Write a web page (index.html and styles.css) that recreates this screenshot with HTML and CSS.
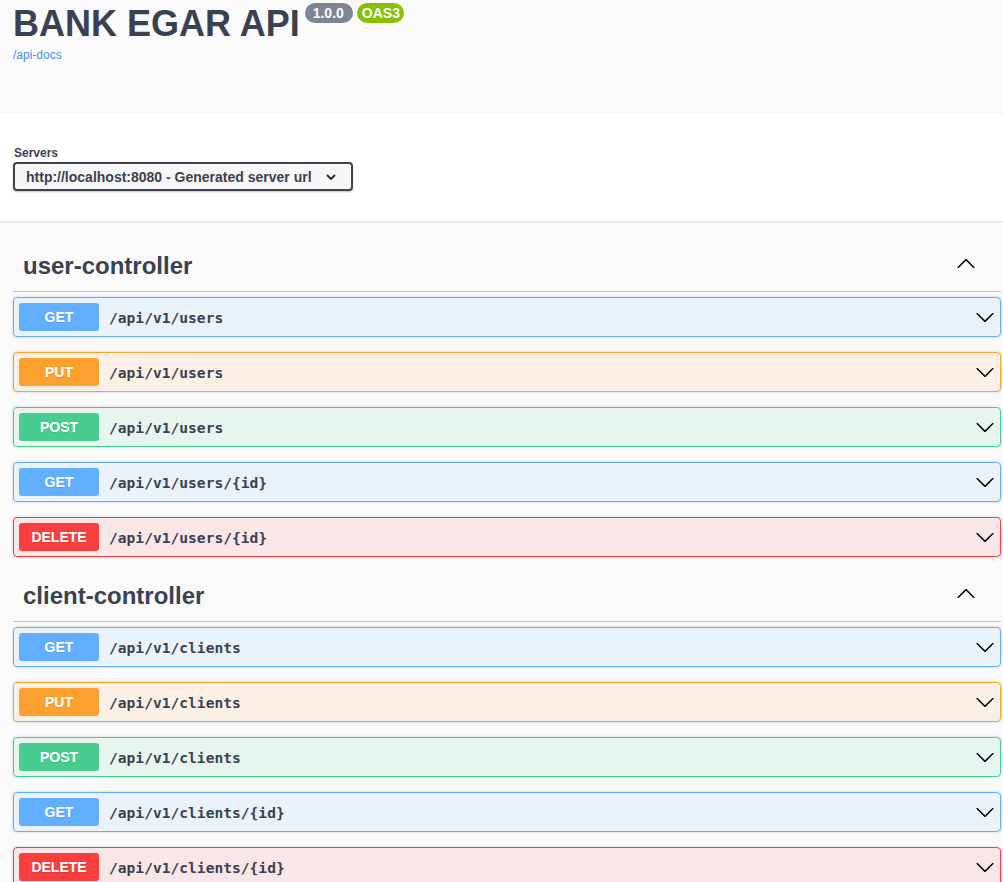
FILE: index.html
```html
<!DOCTYPE html>
<html lang="en">
<head>
<meta charset="utf-8">
<title>BANK EGAR API</title>
<link rel="stylesheet" href="styles.css">
</head>
<body>
<header class="info">
  <div class="wrap">
    <div class="title-row">
      <h2 class="title">BANK EGAR API</h2>
      <span class="badge version">1.0.0</span>
      <span class="badge oas">OAS3</span>
    </div>
    <a class="url" href="#">/api-docs</a>
  </div>
</header>

<section class="scheme">
  <div class="wrap">
    <div class="servers">
      <span class="servers-label">Servers</span>
      <div class="select">
        <span>http://localhost:8080 - Generated server url</span>
        <svg class="select-arrow" width="10" height="6" viewBox="0 0 10 6"><polyline points="1,1 5,5 9,1" fill="none" stroke="#222" stroke-width="1.8"/></svg>
      </div>
    </div>
  </div>
</section>

<main class="wrap">
  <section class="tag-section">
    <h3 class="tag"><span>user-controller</span>
      <svg class="tag-arrow" viewBox="0 0 20 20"><path d="M17.418 14.908c.272.268.709.268.979 0s.271-.701 0-.969l-7.908-7.83c-.27-.268-.707-.268-.979 0l-7.908 7.83c-.27.268-.27.701 0 .969.271.268.709.268.979 0L10 7.767l7.418 7.141z"/></svg>
    </h3>
    <div class="opblock get"><span class="method">GET</span><span class="path">/api/v1/users</span><svg class="chev" viewBox="0 0 20 20"><path d="M17.418 6.109c.272-.268.709-.268.979 0s.271.701 0 .969l-7.908 7.83c-.27.268-.707.268-.979 0l-7.908-7.83c-.27-.268-.27-.701 0-.969.271-.268.709-.268.979 0L10 13.25l7.418-7.141z"/></svg></div>
    <div class="opblock put"><span class="method">PUT</span><span class="path">/api/v1/users</span><svg class="chev" viewBox="0 0 20 20"><path d="M17.418 6.109c.272-.268.709-.268.979 0s.271.701 0 .969l-7.908 7.83c-.27.268-.707.268-.979 0l-7.908-7.83c-.27-.268-.27-.701 0-.969.271-.268.709-.268.979 0L10 13.25l7.418-7.141z"/></svg></div>
    <div class="opblock post"><span class="method">POST</span><span class="path">/api/v1/users</span><svg class="chev" viewBox="0 0 20 20"><path d="M17.418 6.109c.272-.268.709-.268.979 0s.271.701 0 .969l-7.908 7.83c-.27.268-.707.268-.979 0l-7.908-7.83c-.27-.268-.27-.701 0-.969.271-.268.709-.268.979 0L10 13.25l7.418-7.141z"/></svg></div>
    <div class="opblock get"><span class="method">GET</span><span class="path">/api/v1/users/{id}</span><svg class="chev" viewBox="0 0 20 20"><path d="M17.418 6.109c.272-.268.709-.268.979 0s.271.701 0 .969l-7.908 7.83c-.27.268-.707.268-.979 0l-7.908-7.83c-.27-.268-.27-.701 0-.969.271-.268.709-.268.979 0L10 13.25l7.418-7.141z"/></svg></div>
    <div class="opblock delete"><span class="method">DELETE</span><span class="path">/api/v1/users/{id}</span><svg class="chev" viewBox="0 0 20 20"><path d="M17.418 6.109c.272-.268.709-.268.979 0s.271.701 0 .969l-7.908 7.83c-.27.268-.707.268-.979 0l-7.908-7.83c-.27-.268-.27-.701 0-.969.271-.268.709-.268.979 0L10 13.25l7.418-7.141z"/></svg></div>
  </section>

  <section class="tag-section">
    <h3 class="tag"><span>client-controller</span>
      <svg class="tag-arrow" viewBox="0 0 20 20"><path d="M17.418 14.908c.272.268.709.268.979 0s.271-.701 0-.969l-7.908-7.83c-.27-.268-.707-.268-.979 0l-7.908 7.83c-.27.268-.27.701 0 .969.271.268.709.268.979 0L10 7.767l7.418 7.141z"/></svg>
    </h3>
    <div class="opblock get"><span class="method">GET</span><span class="path">/api/v1/clients</span><svg class="chev" viewBox="0 0 20 20"><path d="M17.418 6.109c.272-.268.709-.268.979 0s.271.701 0 .969l-7.908 7.83c-.27.268-.707.268-.979 0l-7.908-7.83c-.27-.268-.27-.701 0-.969.271-.268.709-.268.979 0L10 13.25l7.418-7.141z"/></svg></div>
    <div class="opblock put"><span class="method">PUT</span><span class="path">/api/v1/clients</span><svg class="chev" viewBox="0 0 20 20"><path d="M17.418 6.109c.272-.268.709-.268.979 0s.271.701 0 .969l-7.908 7.83c-.27.268-.707.268-.979 0l-7.908-7.83c-.27-.268-.27-.701 0-.969.271-.268.709-.268.979 0L10 13.25l7.418-7.141z"/></svg></div>
    <div class="opblock post"><span class="method">POST</span><span class="path">/api/v1/clients</span><svg class="chev" viewBox="0 0 20 20"><path d="M17.418 6.109c.272-.268.709-.268.979 0s.271.701 0 .969l-7.908 7.83c-.27.268-.707.268-.979 0l-7.908-7.83c-.27-.268-.27-.701 0-.969.271-.268.709-.268.979 0L10 13.25l7.418-7.141z"/></svg></div>
    <div class="opblock get"><span class="method">GET</span><span class="path">/api/v1/clients/{id}</span><svg class="chev" viewBox="0 0 20 20"><path d="M17.418 6.109c.272-.268.709-.268.979 0s.271.701 0 .969l-7.908 7.83c-.27.268-.707.268-.979 0l-7.908-7.83c-.27-.268-.27-.701 0-.969.271-.268.709-.268.979 0L10 13.25l7.418-7.141z"/></svg></div>
    <div class="opblock delete"><span class="method">DELETE</span><span class="path">/api/v1/clients/{id}</span><svg class="chev" viewBox="0 0 20 20"><path d="M17.418 6.109c.272-.268.709-.268.979 0s.271.701 0 .969l-7.908 7.83c-.27.268-.707.268-.979 0l-7.908-7.83c-.27-.268-.27-.701 0-.969.271-.268.709-.268.979 0L10 13.25l7.418-7.141z"/></svg></div>
  </section>
</main>
</body>
</html>
```

FILE: styles.css
```css
html, body {
  margin: 0;
  padding: 0;
  background: #fafafa;
}

body {
  font-family: "Liberation Sans", Arial, sans-serif;
  color: #3b4151;
}

.wrap {
  padding: 0 2px 0 13px;
}

/* Header / info */
.info {
  height: 113px;
  box-sizing: border-box;
  padding-top: 3px;
}

.title-row {
  display: flex;
  align-items: flex-start;
}

.title {
  margin: 0;
  font-size: 36px;
  line-height: 41px;
  font-weight: 700;
  color: #3b4151;
}

.badge {
  height: 20px;
  line-height: 20px;
  border-radius: 10px;
  color: #fff;
  font-size: 14px;
  font-weight: 700;
}

.version {
  margin-left: 5px;
  padding: 0 9px 0 8px;
  background: #7d8492;
}

.oas {
  margin-left: 4px;
  padding: 0 4px 0 5px;
  background: #89bf04;
}

.url {
  display: block;
  margin-top: 4px;
  font-size: 12px;
  line-height: 14px;
  color: #4990e2;
  text-decoration: none;
  width: max-content;
}

/* Servers */
.scheme {
  background: #fff;
  box-shadow: 0 1px 2px 0 rgba(0, 0, 0, 0.15);
  padding: 33px 0 30px;
  margin-bottom: 21px;
}

.servers-label {
  display: block;
  padding-left: 1px;
  font-size: 12px;
  line-height: 14px;
  font-weight: 700;
  color: #3b4151;
}

.select {
  margin-top: 2px;
  width: 340px;
  height: 29px;
  box-sizing: border-box;
  border: 2px solid #41444e;
  border-radius: 4px;
  background: #f7f7f7;
  box-shadow: 0 1px 2px 0 rgba(0, 0, 0, 0.25);
  display: flex;
  align-items: center;
  justify-content: space-between;
  padding: 0 15px 0 11px;
  font-size: 14px;
  font-weight: 700;
  color: #3b4151;
}

.select-arrow {
  width: 10px;
  height: 6px;
  flex: none;
}

/* Tag sections */
.tag {
  display: flex;
  justify-content: space-between;
  align-items: flex-start;
  margin: 0 0 5px;
  padding: 10px 20px 11px 10px;
  border-bottom: 1px solid rgba(59, 65, 81, 0.3);
  font-size: 24px;
  line-height: 28px;
  font-weight: 700;
  color: #3b4151;
}

.tag-arrow {
  width: 20px;
  height: 20px;
  margin-top: 1px;
  margin-right: 5px;
  fill: #000;
  flex: none;
}

/* Operation blocks */
.opblock {
  display: flex;
  align-items: center;
  height: 40px;
  box-sizing: border-box;
  padding: 0 5px;
  margin-bottom: 15px;
  border: 1px solid;
  border-radius: 4px;
  box-shadow: 0 0 3px rgba(0, 0, 0, 0.19);
}

.method {
  flex: none;
  width: 80px;
  height: 28px;
  line-height: 28px;
  text-align: center;
  border-radius: 3px;
  color: #fff;
  font-size: 14px;
  font-weight: 700;
  text-shadow: 0 1px 0 rgba(0, 0, 0, 0.1);
}

.path {
  flex: 1;
  margin-left: 10px;
  font-family: "DejaVu Sans Mono", "Liberation Mono", monospace;
  font-size: 14.6px;
  font-weight: 700;
  color: #3b4151;
}

.chev {
  flex: none;
  width: 20px;
  height: 20px;
  fill: #000;
}

.get {
  border-color: #61affe;
  background: rgba(97, 175, 254, 0.1);
}
.get .method { background: #61affe; }

.put {
  border-color: #fca130;
  background: rgba(252, 161, 48, 0.1);
}
.put .method { background: #fca130; }

.post {
  border-color: #49cc90;
  background: rgba(73, 204, 144, 0.1);
}
.post .method { background: #49cc90; }

.delete {
  border-color: #f93e3e;
  background: rgba(249, 62, 62, 0.1);
}
.delete .method { background: #f93e3e; }
```
